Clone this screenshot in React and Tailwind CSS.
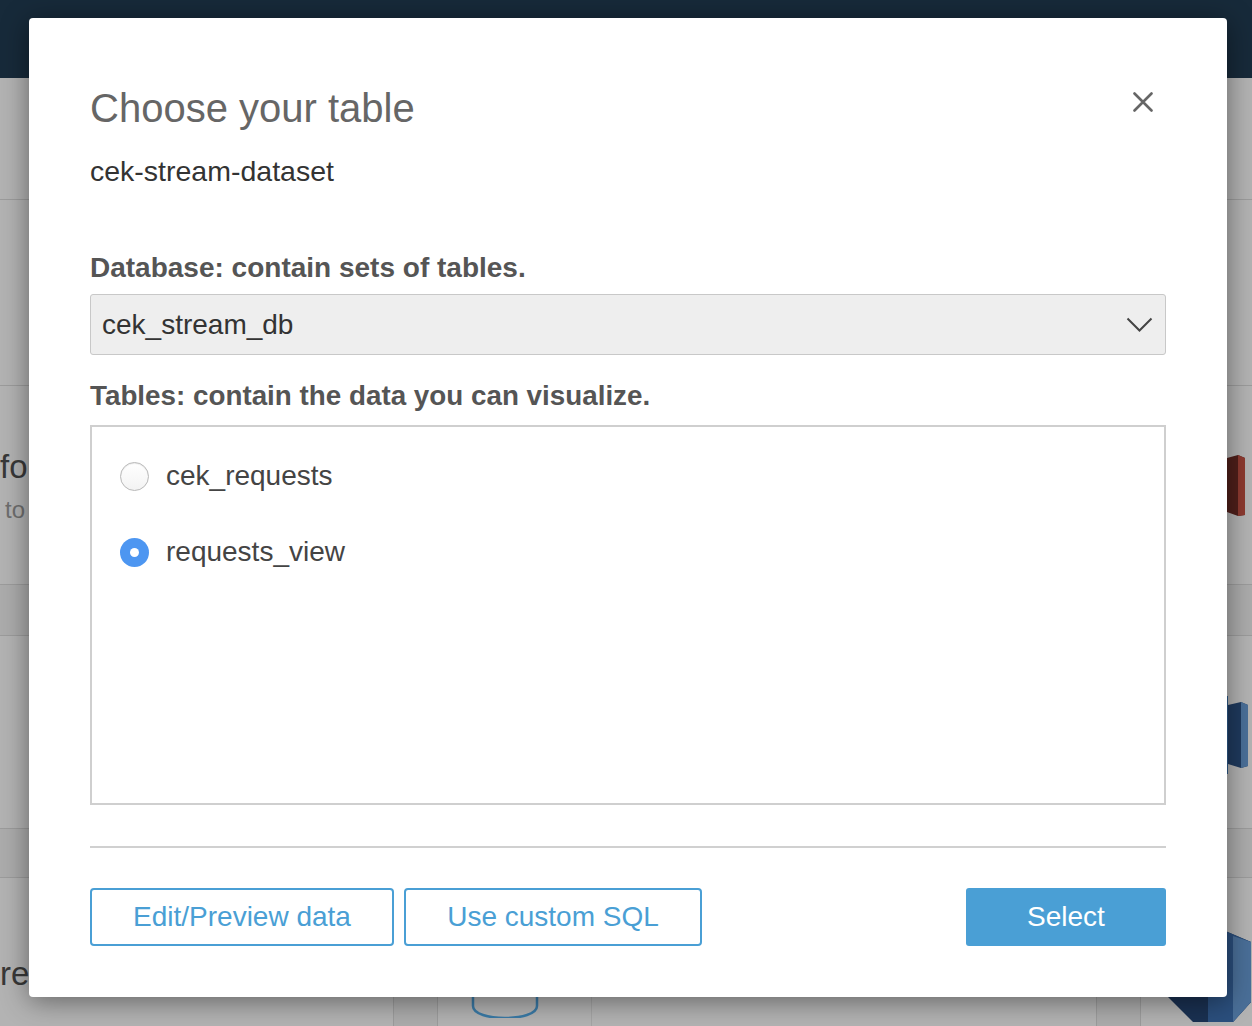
export default function App() {
  return (
    <div className="relative w-[1252px] h-[1026px] overflow-hidden bg-[#b3b3b3] font-['Liberation_Sans',Arial,sans-serif]">
      {/* background page */}
      <div className="flex flex-col h-full">
        <div className="h-[78px] shrink-0 bg-[#172a3a]" />
        <div className="h-[122px] shrink-0 border-b border-[#9c9c9c]" />
        <div className="h-[186px] shrink-0 border-b border-[#9c9c9c]" />
        <div className="h-[199px] shrink-0 border-b border-[#9c9c9c] flex justify-between">
          <div className="flex flex-col pt-[63px]">
            <span className="text-[33px] leading-[36px] text-[#383838]">fo</span>
            <span className="text-[24px] leading-[26px] text-[#6e6e6e] ml-[5px] mt-[12px]">to</span>
          </div>
          <div className="pt-[69px] pr-[6px]">
            <svg width="19" height="61" viewBox="0 0 19 61">
              <polygon points="0,3 11,0 18,3 18,60 11,61 0,57" fill="#4f1f1a" />
              <polygon points="11,0 18,3 18,60 11,61" fill="#8d3a30" />
            </svg>
          </div>
        </div>
        <div className="h-[51px] shrink-0 bg-[#acacac] border-b border-[#9c9c9c]" />
        <div className="h-[193px] shrink-0 border-b border-[#9c9c9c] flex justify-end">
          <div className="pt-[66px] pr-[3px] flex">
            <div className="w-[1px] h-[78px] bg-[#2d5a8a] mt-[-6px]" />
            <svg width="21" height="66" viewBox="0 0 21 66">
              <polygon points="0,3 13,0 20,3 20,64 13,66 0,62" fill="#1f3a5e" />
              <polygon points="13,0 20,3 20,64 13,66" fill="#4a6f98" />
            </svg>
          </div>
        </div>
        <div className="h-[49px] shrink-0 bg-[#acacac] border-b border-[#9c9c9c]" />
        <div className="flex-1 flex">
          <div className="w-[394px] shrink-0 border-r border-[#9c9c9c] flex flex-col">
            <span className="mt-[78px] text-[33px] leading-[36px] text-[#383838]">re</span>
          </div>
          <div className="w-[43px] shrink-0 bg-[#acacac]" />
          <div className="w-[660px] shrink-0 border-l border-r border-[#9c9c9c] flex">
            <div className="w-[154px] shrink-0 border-r border-[#a5a5a5] flex justify-center">
              <svg width="70" height="140" viewBox="0 0 70 140" className="ml-[-18px]">
                <path d="M2,80 L2,128 C2,136 18,140 34,140 C50,140 66,136 66,128 L66,80" fill="none" stroke="#3a7aa6" strokeWidth="2.5" />
              </svg>
            </div>
          </div>
          <div className="w-[43px] shrink-0 bg-[#acacac]" />
          <div className="flex-1 border-l border-[#9c9c9c] flex pl-[22px]">
            <svg width="90" height="95" viewBox="0 0 90 95" className="mt-[52px]">
              <polygon points="3,30 30,5 60,0 88,12 88,72 70,92 30,92 3,65" fill="#1a3152" />
              <polygon points="45,2 60,0 88,12 88,72 70,92 45,92" fill="#2b4f7d" />
              <polygon points="70,6 88,12 88,72 70,92" fill="#4a6f98" />
            </svg>
          </div>
        </div>
      </div>

      {/* modal */}
      <div className="absolute left-[29px] top-[18px] w-[1198px] h-[979px] bg-white rounded-[4px] shadow-[0_4px_28px_rgba(0,0,0,0.45)] flex flex-col px-[61px] pt-[68px]">
        <div className="flex justify-between items-start">
          <h1 className="text-[40px] leading-[44px] text-[#666666] font-normal">Choose your table</h1>
          <button className="mt-[6px] mr-[13px] w-[20px] h-[20px] flex items-center justify-center">
            <svg width="20" height="20" viewBox="0 0 20 20">
              <path d="M1.5,1.5 L18.5,18.5 M18.5,1.5 L1.5,18.5" stroke="#666666" strokeWidth="2.6" strokeLinecap="round" />
            </svg>
          </button>
        </div>
        <div className="mt-[25px] text-[28.5px] leading-[32px] text-[#333333]">cek-stream-dataset</div>

        <div className="mt-[66px] text-[28px] leading-[30px] font-bold text-[#555555]">Database: contain sets of tables.</div>
        <div className="mt-[11px] h-[61px] bg-[#eeeeee] border border-[#c8c8c8] rounded-[3px] flex items-center justify-between pl-[11px] pr-[12px]">
          <span className="text-[28px] text-[#333333]">cek_stream_db</span>
          <svg width="27" height="16" viewBox="0 0 27 16">
            <path d="M1.5,1.5 L13.5,13.5 L25.5,1.5" fill="none" stroke="#444444" strokeWidth="2" />
          </svg>
        </div>

        <div className="mt-[26px] text-[27.8px] leading-[30px] font-bold text-[#555555]">Tables: contain the data you can visualize.</div>
        <div className="mt-[14px] h-[380px] border-2 border-[#cfcfcf] flex flex-col pt-[34px] pl-[28px] gap-[46px]">
          <label className="flex items-center gap-[17px] h-[30px]">
            <span className="w-[29px] h-[29px] rounded-full border border-[#b8b8b8] bg-gradient-to-b from-white to-[#f3f3f3] shadow-[inset_0_1px_1px_rgba(0,0,0,0.08)]" />
            <span className="text-[28px] text-[#444444]">cek_requests</span>
          </label>
          <label className="flex items-center gap-[17px] h-[30px]">
            <span className="w-[29px] h-[29px] rounded-full bg-[#4d96f1] flex items-center justify-center">
              <span className="w-[9px] h-[9px] rounded-full bg-white" />
            </span>
            <span className="text-[28px] text-[#444444]">requests_view</span>
          </label>
        </div>

        <div className="mt-[41px] h-[2px] bg-[#d0d0d0]" />

        <div className="mt-[40px] flex items-center">
          <button className="w-[304px] h-[58px] border-2 border-[#4a9fd5] rounded-[4px] text-[28px] text-[#4a9fd5]">Edit/Preview data</button>
          <button className="ml-[10px] w-[298px] h-[58px] border-2 border-[#4a9fd5] rounded-[4px] text-[28px] text-[#4a9fd5]">Use custom SQL</button>
          <button className="ml-auto w-[200px] h-[58px] bg-[#4a9fd5] rounded-[3px] text-[28px] text-white">Select</button>
        </div>
      </div>
    </div>
  );
}
